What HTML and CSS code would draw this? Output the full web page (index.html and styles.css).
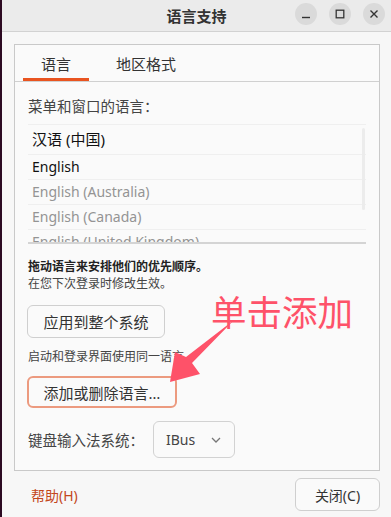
FILE: index.html
```html
<!DOCTYPE html>
<html lang="zh-CN">
<head>
  <meta charset="UTF-8">
  <title>语言支持</title>
  <link rel="stylesheet" href="styles.css">
</head>
<body>

<div class="window">
  <div class="titlebar">
    <span class="title">语言支持</span>
    <div class="winbtns">
      <span class="winbtn">
        <svg width="12" height="12" viewBox="0 0 12 12"><path d="M2 9.5h8" stroke="#333" stroke-width="1.4"/></svg>
      </span>
      <span class="winbtn">
        <svg width="12" height="12" viewBox="0 0 12 12"><rect x="2.2" y="2.2" width="7.6" height="7.6" fill="none" stroke="#333" stroke-width="1.3"/></svg>
      </span>
      <span class="winbtn">
        <svg width="12" height="12" viewBox="0 0 12 12"><path d="M2.5 2.5l7 7M9.5 2.5l-7 7" stroke="#333" stroke-width="1.4"/></svg>
      </span>
    </div>
  </div>

  <div class="content">
    <div class="frame">
      <div class="tabs">
        <div class="tab active">语言</div>
        <div class="tab">地区格式</div>
      </div>

      <div class="page">
        <div class="label">菜单和窗口的语言：</div>

        <div class="langlist">
          <div class="row first">汉语 (中国)</div>
          <div class="row">English</div>
          <div class="row dim">English (Australia)</div>
          <div class="row dim">English (Canada)</div>
          <div class="row dim">English (United Kingdom)</div>
          <div class="scroll"></div>
        </div>

        <div class="hint bold">拖动语言来安排他们的优先顺序。</div>
        <div class="hint">在您下次登录时修改生效。</div>

        <button class="btn apply">应用到整个系统</button>
        <div class="hint note">启动和登录界面使用同一语言</div>
        <button class="btn addlang">添加或删除语言…</button>

        <div class="imrow">
          <span class="label">键盘输入法系统：</span>
          <div class="combo">
            <span>IBus</span>
            <svg width="12" height="8" viewBox="0 0 12 8"><path d="M2 2l4 4 4-4" fill="none" stroke="#777" stroke-width="1.3"/></svg>
          </div>
        </div>
      </div>
    </div>

    <div class="footer">
      <span class="help">帮助(H)</span>
      <button class="btn close">关闭(C)</button>
    </div>
  </div>
</div>

<!-- annotation drawn over the screenshot -->
<div class="callout">单击添加</div>
<svg class="arrow" width="391" height="517" viewBox="0 0 391 517">
  <polygon points="234,320 192,363 200,374 170,382 175,352 186,357" fill="#fe5269"/>
</svg>

</body>
</html>
```

FILE: styles.css
```css
body {
  margin: 0;
  background-color: #2c0a22;
  font-family: "Noto Sans", "Noto Sans CJK SC", sans-serif;
  color: #333;
  overflow: hidden;
}
.window {
  margin-left: 2px;
  height: 517px;
  background-color: #f7f7f7;
  position: relative;
}
.titlebar {
  height: 31px;
  border-bottom: 1px solid #d2d2d2;
  background-color: #ebebeb;
  display: flex;
  align-items: center;
  justify-content: center;
  position: relative;
}
.title {
  font-size: 15px;
  font-weight: bold;
  color: #333;
}
.winbtns {
  position: absolute;
  right: 6px;
  top: 3px;
  display: flex;
  gap: 12px;
}
.winbtn {
  width: 22px;
  height: 22px;
  border-radius: 50%;
  background-color: #dadada;
  display: flex;
  align-items: center;
  justify-content: center;
}
.content {
  padding: 12px 11px 0 12px;
}
.frame {
  border: 1px solid #c9c9c9;
  background-color: #fafafa;
  height: 425px;
}
.tabs {
  display: flex;
  height: 36px;
  border-bottom: 1px solid #d0d0d0;
  padding-left: 8px;
}
.tab {
  font-size: 15px;
  color: #333;
  display: flex;
  align-items: center;
  justify-content: center;
  padding: 0 18px;
  box-sizing: border-box;
  border-bottom: 3px solid transparent;
  padding-top: 3px;
}
.tab.active {
  width: 66px;
  border-bottom-color: #e95420;
  margin-right: 9px;
}
.page {
  padding: 0 13px;
}
.page > .label {
  margin-top: 14px;
  font-size: 14.5px;
  line-height: 20px;
  color: #444;
}
.langlist {
  margin-top: 8px;
  height: 117px;
  overflow: hidden;
  border-top: 1px solid #efefef;
  border-bottom: 2px solid #d4d4d4;
  position: relative;
}
.row {
  height: 24px;
  line-height: 24px;
  padding-left: 4px;
  border-bottom: 1px solid #efefef;
  font-size: 14px;
  color: #111;
}
.row.first {
  height: 29px;
  line-height: 29px;
  font-size: 15px;
}
.row.dim {
  color: #949494;
}
.scroll {
  position: absolute;
  right: 1px;
  top: 3px;
  width: 3px;
  height: 82px;
  background-color: #ececec;
  border-radius: 2px;
}
.hint {
  font-size: 12px;
  line-height: 17px;
  color: #444;
}
.hint.bold {
  margin-top: 14px;
  font-weight: bold;
  color: #222;
}
.hint.note {
  margin-top: 10px;
}
.btn {
  display: block;
  font-family: inherit;
  font-size: 15px;
  color: #333;
  background-color: #fafafa;
  border: 1px solid #cfcfcf;
  border-radius: 6px;
  cursor: pointer;
}
.apply {
  margin-top: 13px;
  margin-left: -1px;
  width: 138px;
  height: 33px;
}
.addlang {
  margin-top: 11px;
  margin-left: -1px;
  width: 150px;
  height: 32px;
  border: 2px solid #ec9a7f;
}
.imrow {
  margin-top: 13px;
  display: flex;
  align-items: center;
}
.imrow .label {
  font-size: 14.5px;
  color: #444;
  width: 125px;
}
.combo {
  width: 82px;
  height: 37px;
  box-sizing: border-box;
  border: 1px solid #d2d2d2;
  border-radius: 6px;
  display: flex;
  align-items: center;
  justify-content: space-between;
  padding: 0 12px 0 12px;
  font-size: 14px;
  color: #444;
}
.footer {
  display: flex;
  justify-content: space-between;
  align-items: center;
  margin-top: 7px;
}
.help {
  margin-left: 17px;
  font-size: 14px;
  color: #c3461c;
}
.close {
  width: 85px;
  height: 33px;
  font-size: 14px;
}
.callout {
  position: absolute;
  left: 211px;
  top: 291px;
  font-size: 35.5px;
  line-height: 40px;
  color: #fe5269;
  font-family: "Noto Sans CJK SC", sans-serif;
}
.arrow {
  position: absolute;
  left: 0;
  top: 0;
  pointer-events: none;
}
```
